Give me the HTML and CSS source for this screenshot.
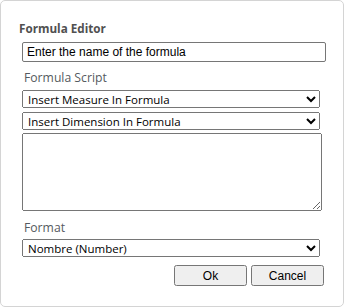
FILE: index.html
```html
<!DOCTYPE html>
<html lang="en">
<head>
    <meta charset="UTF-8">
    <meta name="viewport" content="width=device-width, initial-scale=1.0">
    <title>Formula Editor</title>
    <link rel="stylesheet" href="styles.css">
</head>
<body>
    <div class="panel">
        <div class="title">Formula Editor</div>

        <input type="text" class="name-input" value="Enter the name of the formula">

        <div class="label">Formula Script</div>
        <select class="field">
            <option>Insert Measure In Formula</option>
        </select>
        <select class="field second">
            <option>Insert Dimension In Formula</option>
        </select>
        <textarea class="script"></textarea>

        <div class="label format-label">Format</div>
        <select class="field format">
            <option>Nombre (Number)</option>
        </select>

        <div class="actions">
            <button>Ok</button>
            <button>Cancel</button>
        </div>
    </div>
</body>
</html>
```

FILE: styles.css
```css
body {
    margin: 0;
    background-color: white;
    font-family: "Open Sans", sans-serif;
}
.panel {
    box-sizing: border-box;
    width: 344px;
    height: 307px;
    border: 1px solid #d4d4d4;
    border-radius: 5px;
    padding: 19px 0 0 18px;
}
.title {
    font-size: 11.7px;
    font-weight: bold;
    line-height: 16px;
    color: #505050;
}
.name-input {
    display: block;
    box-sizing: border-box;
    width: 304px;
    height: 20px;
    margin: 6px 0 0 3px;
    padding: 0 4px;
    border: 1px solid #767676;
    border-radius: 2px;
    font-family: "Liberation Sans", Arial, sans-serif;
    font-size: 12px;
    color: #000;
}
.label {
    margin: 8px 0 0 5px;
    font-size: 12.2px;
    line-height: 16px;
    color: #555a60;
}
.field {
    display: block;
    box-sizing: border-box;
    width: 298px;
    height: 18px;
    margin: 4px 0 0 3px;
    padding: 0 1px;
    font-family: "Open Sans", sans-serif;
    font-size: 11.5px;
    line-height: 14px;
    color: #000;
}
.field.second {
    margin-top: 4px;
}
.script {
    display: block;
    box-sizing: border-box;
    width: 300px;
    height: 78px;
    margin: 3px 0 0 3px;
    resize: both;
}
.format-label {
    margin-top: 9px;
}
.field.format {
    margin-top: 3px;
}
.actions {
    display: flex;
    justify-content: flex-end;
    gap: 4px;
    width: 302px;
    margin: 8px 0 0 3px;
}
.actions button {
    box-sizing: border-box;
    width: 73px;
    height: 21px;
    font-family: "Liberation Sans", Arial, sans-serif;
    font-size: 12px;
}
```
